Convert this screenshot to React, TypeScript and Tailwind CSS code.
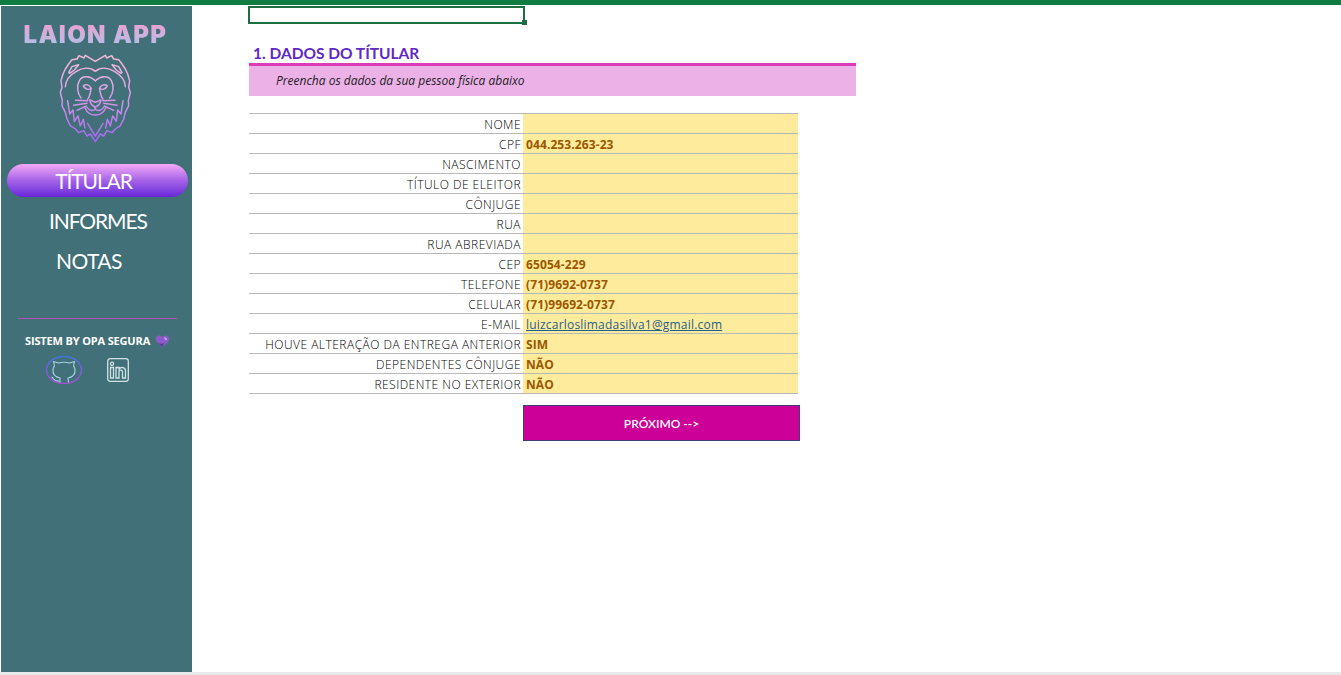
const rows: { label: string; value?: string; link?: boolean }[] = [
  { label: "NOME" },
  { label: "CPF", value: "044.253.263-23" },
  { label: "NASCIMENTO" },
  { label: "TÍTULO DE ELEITOR" },
  { label: "CÔNJUGE" },
  { label: "RUA" },
  { label: "RUA ABREVIADA" },
  { label: "CEP", value: "65054-229" },
  { label: "TELEFONE", value: "(71)9692-0737" },
  { label: "CELULAR", value: "(71)99692-0737" },
  { label: "E-MAIL", value: "luizcarloslimadasilva1@gmail.com", link: true },
  { label: "HOUVE ALTERAÇÃO DA ENTREGA ANTERIOR", value: "SIM" },
  { label: "DEPENDENTES CÔNJUGE", value: "NÃO" },
  { label: "RESIDENTE NO EXTERIOR", value: "NÃO" },
];

// left half of the lion, mirrored around x=135
function LionHalf() {
  return (
    <>
      <path d="M135 32 L120 23 L105 14 L101 22 L86 15 L80 25 L65 27 L55 40 L45 55 L38 70 L32 90 L35 110 L30 125 L36 150 L35 165 L45 185 L50 205 L60 225 L75 235 L85 246 L100 240 L110 256 L120 250 L135 273" />
      <path d="M55 66 L65 48 L85 42 L72 58 L58 68" />
      <path d="M45 108 C46 88 60 72 78 62 C95 52 118 48 135 62" />
      <path d="M52 150 L58 190 L68 178 L72 212 L83 196 L90 226 L99 206 L104 232" />
      <path d="M135 256 L120 232 L112 218" />
      <path d="M135 90 C120 76 96 72 87 90 C79 105 80 126 92 142" />
      <path d="M99 106 C106 99 116 102 123 113 C114 119 105 116 99 106 Z" />
      <path d="M122 116 C120 128 118 138 112 146" />
      <path d="M135 155 C128 152 122 148 118 148 C120 158 126 166 135 169" />
      <path d="M135 169 L135 176 C128 183 118 180 110 170" />
      <path d="M135 193 C120 193 110 186 104 172" />
      <path d="M112 150 L76 149 M110 158 L70 164 M108 166 L80 179" />
    </>
  );
}

function LionLogo() {
  return (
    <svg width="80" height="90" viewBox="20 10 240 270" fill="none" stroke="url(#lion)" strokeWidth="4.4" strokeLinejoin="round" strokeLinecap="round">
      <defs>
        <linearGradient id="lion" x1="0" y1="10" x2="0" y2="280" gradientUnits="userSpaceOnUse">
          <stop offset="0" stopColor="#f6bcd8" />
          <stop offset="0.45" stopColor="#de9ee6" />
          <stop offset="1" stopColor="#a060f6" />
        </linearGradient>
      </defs>
      <LionHalf />
      <g transform="translate(270 0) scale(-1 1)">
        <LionHalf />
      </g>
    </svg>
  );
}

function HeartGem() {
  return (
    <svg width="15" height="13" viewBox="0 0 15 13">
      <path d="M7.5 12.5 L1.5 6.5 C-0.5 3.5 1.5 .5 4.2 .5 C5.6 .5 6.8 1.2 7.5 2.4 C8.2 1.2 9.4 .5 10.8 .5 C13.5 .5 15.5 3.5 13.5 6.5 Z" fill="#8b5cc8" />
      <path d="M9 2.5 C10.5 2 12 3 12 5 C10.5 5.5 9.5 4.5 9 2.5 Z" fill="#c6a0ea" />
      <path d="M7.5 12.5 L3 7.5 C5 9 7 9 9 8 Z" fill="#5b3a94" />
    </svg>
  );
}

function GithubRing() {
  return (
    <svg width="38" height="30" viewBox="0 0 38 30" fill="none" strokeLinecap="round" strokeLinejoin="round">
      <defs>
        <linearGradient id="ring" x1="0" y1="0" x2="0" y2="30" gradientUnits="userSpaceOnUse">
          <stop offset="0" stopColor="#3f74d8" />
          <stop offset="1" stopColor="#a84fd0" />
        </linearGradient>
      </defs>
      <ellipse cx="19" cy="15" rx="17.5" ry="13.5" stroke="url(#ring)" strokeWidth="1.6" />
      <path d="M15 27 L15 23 C10 22 7.5 19 8 14.5 C8.2 12.5 9 11.5 9.5 11 L8.5 6.5 L13.5 8 C17 7 21 7 24.5 8 L29.5 6.5 L28.5 11 C29 11.5 29.8 12.5 30 14.5 C30.5 19 28 22 23 23 L23.5 27" stroke="#a9d3e6" strokeWidth="1.1" />
      <path d="M14 26 C11 26.5 9 25 7 22" stroke="#a9d3e6" strokeWidth="1.1" />
    </svg>
  );
}

function LinkedinBox() {
  return (
    <svg width="22" height="24" viewBox="0 0 22 24" fill="none" stroke="#d0e2e6" strokeWidth="1.3">
      <rect x="0.7" y="0.7" width="20.6" height="22.6" rx="2.5" />
      <path d="M3.5 9.5 H6.5 V20 H3.5 Z" />
      <circle cx="5" cy="5.8" r="1.6" />
      <path d="M9 9.5 H12 V11 C14 8.6 18.5 9 18.5 13 V20 H15.5 V14 C15.5 11.6 12 11.6 12 14 V20 H9 Z" />
    </svg>
  );
}

function Sidebar() {
  return (
    <aside className="ml-px flex w-[191px] shrink-0 flex-col bg-[#417078] font-['Lato',sans-serif]">
      <h1 className="mt-[15px] bg-linear-to-b from-[#f09ccc] to-[#a4c4ec] bg-clip-text pr-[2px] text-center font-['Inter',sans-serif] text-[24px] leading-[28px] font-black tracking-[1.3px] text-transparent">
        LAION APP
      </h1>
      <div className="mt-[5px] ml-[56px]">
        <LionLogo />
      </div>
      <nav className="mt-[20px] flex flex-col text-[21px] leading-[40px] text-white">
        <a className="mr-[4px] ml-[6px] flex h-[33px] items-center justify-center rounded-full bg-linear-to-b from-[#f6a8f4] via-[#a562e8] to-[#6a22d8] pr-[8px] tracking-[-1.1px]">
          TÍTULAR
        </a>
        <a className="mt-[4px] pl-[48px] tracking-[-1.1px]">INFORMES</a>
        <a className="pl-[55px] tracking-[-0.6px]">NOTAS</a>
      </nav>
      <hr className="mt-[37px] mr-[15px] ml-[17px] border-t border-[#b650b8]" />
      <div className="mt-[14px] flex items-center gap-[5px] pl-[24px] font-['Open_Sans',sans-serif] text-[11px] leading-[16px] font-bold tracking-[-0.15px] text-white">
        SISTEM BY OPA SEGURA
        <HeartGem />
      </div>
      <div className="mt-[6px] flex items-center gap-[24px] pl-[44px]">
        <GithubRing />
        <LinkedinBox />
      </div>
    </aside>
  );
}

export default function App() {
  return (
    <div className="flex h-[675px] flex-col overflow-hidden bg-white">
      <div className="h-[5px] shrink-0 bg-[#107c41]" />
      <div className="mt-px flex min-h-0 flex-1">
        <Sidebar />
        <main className="flex-1 pl-[57px]">
          <div className="relative -ml-px h-[18px] w-[277px] border-2 border-[#1d6f42]">
            <span className="absolute right-[-4px] bottom-[-3px] h-[5px] w-[5px] bg-[#1d6f42]" />
          </div>
          <h2 className="mt-[20px] pl-[4px] font-['Lato',sans-serif] text-[15.5px] leading-[19px] font-bold text-[#6128c8]">
            1. DADOS DO TÍTULAR
          </h2>
          <div className="h-[33px] w-[607px] border-t-[3px] border-[#dc3cb8] bg-[#ecb2e8] pl-[27px] font-['Open_Sans',sans-serif] text-[12px] leading-[29px] text-[#222222] italic">
            Preencha os dados da sua pessoa física abaixo
          </div>
          <div className="mt-[17px] w-[549px] border-t border-[#b8b8b8]">
            {rows.map((row) => (
              <div key={row.label} className="flex h-[20px] border-b border-[#b8b8b8]">
                <div className="w-[274px] pr-[2px] text-right font-['Open_Sans',sans-serif] text-[12px] leading-[21px] font-light tracking-[0.48px] text-black">
                  {row.label}
                </div>
                <div
                  className={
                    row.link
                      ? "flex-1 bg-[#ffeb9c] pl-[3px] font-['Open_Sans',sans-serif] text-[12px] leading-[21px] tracking-[0.2px] text-[#1f5f8b] underline"
                      : "flex-1 bg-[#ffeb9c] pl-[3px] font-['Open_Sans',sans-serif] text-[12px] leading-[21px] font-bold tracking-[0.1px] text-[#9c5700]"
                  }
                >
                  {row.value}
                </div>
              </div>
            ))}
          </div>
          <button className="mt-[11px] ml-[274px] block h-[36px] w-[277px] border border-[#3f3f76] bg-[#cc0099] pt-[2px] font-['Lato',sans-serif] text-[12px] font-semibold text-white">
            PRÓXIMO --&gt;
          </button>
        </main>
      </div>
      <div className="h-[3px] shrink-0 bg-[#e6e9ea]" />
    </div>
  );
}
